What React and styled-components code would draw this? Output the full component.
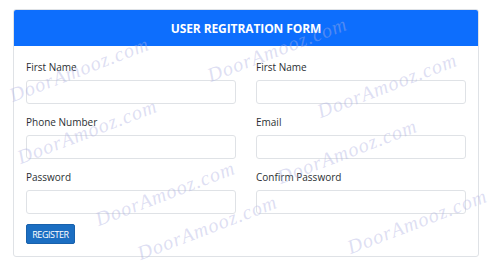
import React from "react";
import styled, { createGlobalStyle } from "styled-components";

const GlobalStyle = createGlobalStyle`
  body {
    margin: 0;
    background: #ffffff;
    font-family: "Open Sans", "Noto Sans", Arial, sans-serif;
    color: #212529;
  }
`;

const Page = styled.div`
  position: relative;
  width: 500px;
  height: 270px;
  overflow: hidden;
  padding: 9px 0 0 13px;
  box-sizing: border-box;
`;

const Card = styled.div`
  width: 466px;
  border: 1px solid #dfe2e6;
  border-radius: 3px;
  box-sizing: border-box;
  overflow: hidden;
`;

const Header = styled.div`
  height: 36px;
  background: #0d6efd;
  display: flex;
  align-items: center;
  justify-content: center;
`;

const Title = styled.h3`
  margin: 0;
  color: #ffffff;
  font-size: 12px;
  font-weight: 700;
  letter-spacing: -0.1px;
`;

const Body = styled.form`
  padding: 14px 12px 12px 12px;
`;

const Grid = styled.div`
  display: grid;
  grid-template-columns: 210px 210px;
  column-gap: 20px;
  row-gap: 11px;
`;

const Field = styled.div`
  display: flex;
  flex-direction: column;
  gap: 6px;
`;

const Label = styled.label`
  font-size: 10px;
  line-height: 14px;
  color: #2b2f33;
`;

const Input = styled.input`
  height: 24px;
  box-sizing: border-box;
  border: 1px solid #dfe2e6;
  border-radius: 3px;
  padding: 0 6px;
  font: inherit;
  font-size: 10px;
  outline: none;
`;

const Button = styled.button`
  margin-top: 10px;
  width: 49px;
  height: 20px;
  padding: 0;
  background: #1b6ec2;
  border: 1px solid #1861ac;
  border-radius: 2px;
  color: #ffffff;
  font-family: "Open Sans", Arial, sans-serif;
  font-size: 9px;
  letter-spacing: -0.45px;
  display: block;
`;

const Watermarks = styled.div`
  position: absolute;
  inset: 0;
  pointer-events: none;
`;

const Mark = styled.span`
  position: absolute;
  font-family: "Liberation Serif", "DejaVu Serif", serif;
  font-style: italic;
  font-size: 20px;
  line-height: 22px;
  letter-spacing: 1px;
  color: rgba(175, 178, 226, 0.42);
  transform: rotate(-21deg);
  transform-origin: left bottom;
  white-space: nowrap;
`;

// start points (left, baseline-ish) of the diagonal watermark copies
const marks = [
  [14, 106], [212, 86], [322, 122],
  [22, 168], [100, 230], [282, 188],
  [142, 264], [352, 258],
];

const fields = [
  ["First Name", "text"],
  ["First Name", "text"],
  ["Phone Number", "tel"],
  ["Email", "email"],
  ["Password", "password"],
  ["Confirm Password", "password"],
];

export default function App() {
  return (
    <>
      <GlobalStyle />
      <Page>
        <Card>
          <Header>
            <Title>USER REGITRATION FORM</Title>
          </Header>
          <Body onSubmit={(e) => e.preventDefault()}>
            <Grid>
              {fields.map(([label, type], i) => (
                <Field key={i}>
                  <Label>{label}</Label>
                  <Input type={type} />
                </Field>
              ))}
            </Grid>
            <Button type="submit">REGISTER</Button>
          </Body>
        </Card>
        <Watermarks>
          {marks.map(([x, y], i) => (
            <Mark key={i} style={{ left: x, top: y - 22 }}>
              DoorAmooz.com
            </Mark>
          ))}
        </Watermarks>
      </Page>
    </>
  );
}
